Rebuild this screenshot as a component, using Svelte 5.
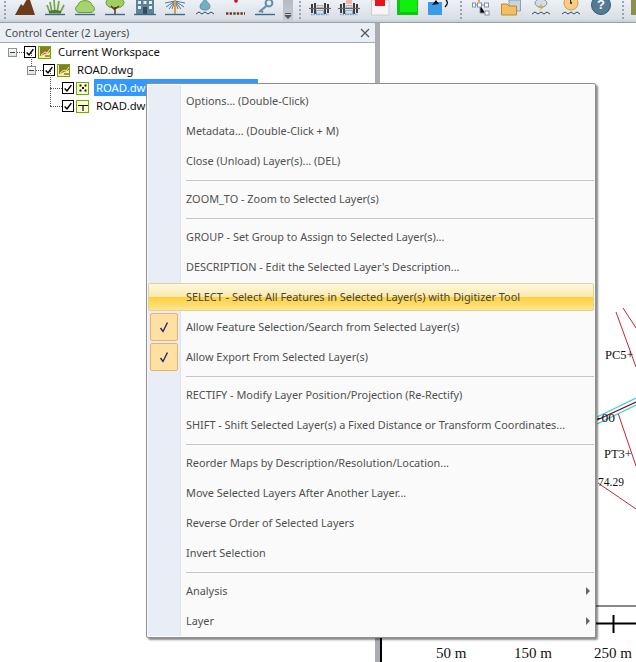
<script lang="ts">
    // Context menu entries: null marks a separator line
    type Entry = { label: string; checked?: boolean; hot?: boolean; sub?: boolean } | null;

    const entries: Entry[] = [
        { label: 'Options... (Double-Click)' },
        { label: 'Metadata... (Double-Click + M)' },
        { label: 'Close (Unload) Layer(s)... (DEL)' },
        null,
        { label: 'ZOOM_TO - Zoom to Selected Layer(s)' },
        null,
        { label: 'GROUP - Set Group to Assign to Selected Layer(s)...' },
        { label: "DESCRIPTION - Edit the Selected Layer's Description..." },
        { label: 'SELECT - Select All Features in Selected Layer(s) with Digitizer Tool', hot: true },
        { label: 'Allow Feature Selection/Search from Selected Layer(s)', checked: true },
        { label: 'Allow Export From Selected Layer(s)', checked: true },
        null,
        { label: 'RECTIFY - Modify Layer Position/Projection (Re-Rectify)' },
        { label: 'SHIFT - Shift Selected Layer(s) a Fixed Distance or Transform Coordinates...' },
        null,
        { label: 'Reorder Maps by Description/Resolution/Location...' },
        { label: 'Move Selected Layers After Another Layer...' },
        { label: 'Reverse Order of Selected Layers' },
        { label: 'Invert Selection' },
        null,
        { label: 'Analysis', sub: true },
        { label: 'Layer', sub: true },
    ];

    const tree = [
        { label: 'Current Workspace', depth: 0, expander: true, glyph: 'work' },
        { label: 'ROAD.dwg', depth: 1, expander: true, glyph: 'work' },
        { label: 'ROAD.dwg', depth: 2, glyph: 'points', selected: true },
        { label: 'ROAD.dwg', depth: 2, glyph: 'lines' },
    ];
</script>

<div class="window">
    <div class="toolbar">
        <span class="grip"></span>
        <div class="group first">
            <svg class="tool" viewBox="0 0 30 22"><path d="M5 15 L11 4 L13 6 L17 -1 L20 0 L25 15Z" fill="#6b3b1c"/></svg>
            <svg class="tool" viewBox="0 0 30 22"><path d="M10 13 L7 5 M12 13 L10 2 M15 13 L14 0 M17 13 L19 1 M20 13 L24 5" stroke="#79a648" stroke-width="1.700" fill="none"/><path d="M9 11 Q15 9 21 11 V13.500 H9Z" fill="#4f7a34"/><path d="M5 14.500H25" stroke="#3e6a8c" stroke-width="1.400"/></svg>
            <svg class="tool" viewBox="0 0 30 22"><path d="M9 12.500 C4 11 5 6 8 5.500 C8 -1 22 -1 22 5.500 C25 6 26 11 21 12.500Z" fill="#a6d36e" stroke="#6d9a3e"/><path d="M5 14.500H25" stroke="#3e6a8c" stroke-width="1.400"/></svg>
            <svg class="tool" viewBox="0 0 30 22"><path d="M6 2 C6 -3 24 -3 24 2 C24 7 19 8 15 8 C11 8 6 7 6 2Z" fill="#9fcf60" stroke="#6d9a3e"/><path d="M15 14 V7 M15 10 L11 6 M15 9 L19 6" stroke="#5a3518" stroke-width="1.500" fill="none"/><path d="M5 14.500H25" stroke="#3e6a8c" stroke-width="1.400"/></svg>
            <svg class="tool" viewBox="0 0 30 22"><path d="M6 0H24V14H6Z" fill="#5f8296"/><path d="M8 1h3v3h-3z M13.500 1h3v3h-3z M19 1h3v3h-3z M8 6h3v3h-3z M19 6h3v3h-3z" fill="#e6eef2"/><path d="M13 7h4v7h-4z" fill="#2f4f63"/><path d="M4 14.500H26" stroke="#3e6a8c" stroke-width="1.400"/></svg>
            <svg class="tool" viewBox="0 0 30 22"><path d="M15 1 L5 3 M15 1 L6 7 M15 1 L9 9 M15 1 L12 9 M15 1 L18 9 M15 1 L21 9 M15 1 L24 7 M15 1 L25 3" stroke="#55788f" stroke-width="1" fill="none"/><path d="M15 1V14" stroke="#e59a45" stroke-width="2"/><path d="M5 14.500H25" stroke="#3e6a8c" stroke-width="1.400"/></svg>
            <svg class="tool" viewBox="0 0 30 22"><path d="M15 -1 C18 3 20 4 20 6.500 C20 9 18 10 15 10 C12 10 10 9 10 6.500 C10 4 12 3 15 -1Z" fill="#6fb0c2" stroke="#3e6a8c" stroke-width=".6"/><path d="M6 14 l3 -2 3 2 3 -2 3 2 3 -2 3 2" stroke="#2f4f63" fill="none"/></svg>
            <svg class="tool" viewBox="0 0 30 22"><circle cx="16" cy="1" r="1.800" fill="#c3122a"/><path d="M6 13.500H25" stroke="#6b3b1c" stroke-width="2.400" stroke-dasharray="2.400 1.200"/></svg>
            <svg class="tool" viewBox="0 0 30 22"><circle cx="19" cy="3" r="3.400" fill="none" stroke="#5f8eaa" stroke-width="2"/><path d="M17 5.500 L9 12 M11 10.500 L13 12.500" stroke="#5f8eaa" stroke-width="2"/><path d="M5 14.500H25" stroke="#3e6a8c" stroke-width="1.400"/></svg>
            <span class="overflow"><svg viewBox="0 0 9 6" width="9" height="6"><path d="M1 0.500H7 M1 2.500H7 L4 5.500Z" stroke="#555" fill="#555" stroke-width="1"/></svg></span>
        </div>
        <div class="group second">
            <span class="grip"></span>
            {#each [0, 1] as i}
                <svg class="bell" viewBox="0 0 22 22">
                    {#if i === 1}<rect x="8" y="0" width="6" height="4" fill="#ecb6a8"/>{/if}
                    <path d="M3 4V13 M19 4V13 M6 3V14 M16 3V14" stroke="#2c2c2c" stroke-width="1.800"/>
                    <path d="M0 8.500H22" stroke="#666" stroke-width="1.200"/>
                    <path d="M8 5.500h6v2h-6z" fill="#e8e4dc" stroke="#8a8378" stroke-width=".5"/>
                    <path d="M2 14.500h18" stroke="#7aa6cc" stroke-width="1.600" stroke-dasharray="1.500 1"/>
                    <path d="M7.500 10.500h7v3.500h-7z" fill="#cfe2f2" stroke="#6a8caa" stroke-width=".6"/>
                </svg>
            {/each}
            <svg class="red" viewBox="0 0 20 22"><path d="M1.500 0H19V15H1.500Z" fill="#f6f6f6" stroke="#ccc"/><path d="M5 0H15V6H5Z" fill="#e8141c"/></svg>
            <svg class="green" viewBox="0 0 21 22"><path d="M0 0H21V15H0Z" fill="#12c412"/><path d="M3 0H20V12H3Z" fill="#0ff00f"/></svg>
            <svg class="blue" viewBox="0 0 22 22"><path d="M0 2H14V15H0Z" fill="#3c9ae8"/><path d="M4 5 L8 0 L11 4Z" fill="#111"/><path d="M18 0 C20 2 20 4 17 7" stroke="#111" stroke-width="1.400" fill="none"/></svg>
            <span class="grip mid"></span>
            <svg class="net" viewBox="0 0 18 22"><path d="M3 5H15 M8 5V13H13" stroke="#7c94a8"/><rect x="0.500" y="3" width="3" height="4" fill="#fff" stroke="#7c94a8"/><rect x="5.500" y="3" width="4" height="4" fill="#fff" stroke="#7c94a8"/><rect x="12.500" y="3" width="4" height="4" fill="#fff" stroke="#7c94a8"/><rect x="13" y="11" width="4" height="4" fill="#fff" stroke="#7c94a8"/><path d="M6 0h2v2h-2z" fill="#e8a33d"/></svg>
            <svg class="folder" viewBox="0 0 20 22"><path d="M8 0H19.500V11H8Z" fill="#c7d3dd" stroke="#8ba0b2"/><path d="M0.500 4H6L8 6H15.500V15H0.500Z" fill="#f2c063" stroke="#c08a2e"/></svg>
            <svg class="bolt" viewBox="0 0 18 22"><ellipse cx="9" cy="3" rx="6" ry="4" fill="#d4dde5" stroke="#7c94a8"/><path d="M10 3 L6 8 H9 L7 11 L12 7 H9Z" fill="#e8a33d"/><path d="M0 14 l3 -2 3 2 3 -2 3 2 3 -2 3 2" stroke="#2f4f63" fill="none"/></svg>
            <svg class="gauge" viewBox="0 0 18 22"><circle cx="9" cy="3" r="7" fill="#f5cd86" stroke="#d39c3f"/><path d="M9 3 L8 -2" stroke="#222"/><circle cx="9" cy="3" r="1" fill="#222"/><path d="M0 14 l3 -2 3 2 3 -2 3 2 3 -2 3 2" stroke="#2f4f63" fill="none"/></svg>
            <span class="help"><span>?</span></span>
            <span class="grip last"></span>
            <svg class="tail" viewBox="0 0 6 22"><path d="M0 0H6V15H0Z" fill="#8f8f4c"/></svg>
        </div>
    </div>

    <div class="main">
        <section class="panel">
            <header class="panel-head">
                <span>Control Center (2 Layers)</span>
                <svg viewBox="0 0 10 10" width="10" height="10"><path d="M1 1L9 9M9 1L1 9" stroke="#555" stroke-width="1.200"/></svg>
            </header>
            <div class="tree">
                {#each tree as node, i}
                    <div class="node" style="padding-left: {8 + node.depth * 19}px">
                        {#if node.depth > 0}
                            <i class="vline" class:long={i === 3} style="left: {node.depth === 1 ? 31 : 50}px"></i>
                        {/if}
                        {#if node.expander}
                            <span class="expander"></span><span class="dots short"></span>
                        {:else}
                            <span class="dots"></span>
                        {/if}
                        <span class="check">
                            <svg viewBox="0 0 12 12" width="10" height="10"><path d="M2 6.500L4.800 9.500L10 2.500" fill="none" stroke="#000" stroke-width="1.800"/></svg>
                        </span>
                        <span class="layer" class:work={node.glyph === 'work'}>
                            {#if node.glyph === 'work'}
                                <svg viewBox="0 0 10 10" width="10" height="10"><path d="M0 0H10V5L0 9Z" fill="#8c7a2a"/><path d="M1 8L5 5L7 6L10 2" fill="none" stroke="#f4ecb0" stroke-width="1"/><path d="M5 9H10" stroke="#b33" stroke-width="1.200"/></svg>
                            {:else if node.glyph === 'points'}
                                <svg viewBox="0 0 10 10" width="10" height="10"><path d="M1.500 1.500h2v2h-2z M6.500 1.500h2v2h-2z M4 4h2v2h-2z M1.500 6.500h2v2h-2z M6.500 6.500h2v2h-2z" fill="#111"/></svg>
                            {:else}
                                <svg viewBox="0 0 10 10" width="10" height="10"><path d="M0 4.500H10 M5 4.500V10" stroke="#111" stroke-width="1.200"/></svg>
                            {/if}
                        </span>
                        <span class="node-label" class:selected={node.selected}>{node.label}</span>
                    </div>
                {/each}
            </div>
        </section>

        <div class="splitter"></div>

        <div class="map">
            <!-- map drawing: coordinates are the content here, origin is the page -->
            <svg viewBox="380 23 256 639" width="256" height="639">
                <g fill="none">
                    <path d="M616 312L636 367M623 308L636 328M618 413L636 466M598 483L636 509" stroke="#c6242c"/>
                    <path d="M597 417L636 398M597 424L636 405" stroke="#35d4dc" stroke-width="1.200"/>
                    <path d="M597 420L636 402" stroke="#7a0f16" stroke-width="1.300"/>
                    <path d="M381 600V662" stroke="#000" stroke-width="2"/>
                    <path d="M596 606H636" stroke="#111"/>
                    <path d="M596 623.500H636" stroke="#000" stroke-width="2"/>
                    <path d="M613.500 615V633" stroke="#000" stroke-width="2"/>
                </g>
                <g class="map-text">
                    <text x="605" y="359">PC5+</text>
                    <text class="big" x="597" y="422">-00</text>
                    <text x="604" y="458">PT3+</text>
                    <text class="small" x="598" y="486">74.29</text>
                </g>
                <g class="scale-text">
                    <text x="436" y="658">50 m</text>
                    <text x="514" y="658">150 m</text>
                    <text x="594" y="658">250 m</text>
                </g>
            </svg>
        </div>
    </div>

    <div class="menu">
        <div class="gutter"></div>
        {#each entries as entry}
            {#if entry === null}
                <div class="sep"></div>
            {:else}
                <div class="item" class:hot={entry.hot}>
                    <span class="mark">
                        {#if entry.checked}
                            <span class="tick">
                                <svg viewBox="0 0 10 12" width="10" height="12"><path d="M1.500 7L4 10.500L8.500 1.500" fill="none" stroke="#1c2a6b" stroke-width="1.400"/></svg>
                            </span>
                        {/if}
                    </span>
                    <span class="text">{entry.label}</span>
                    {#if entry.sub}<span class="arrow"></span>{/if}
                </div>
            {/if}
        {/each}
    </div>
</div>

<style>
    :global(body) {
        margin: 0;
    }

    .window {
        position: relative;
        width: 636px;
        height: 662px;
        overflow: hidden;
        display: flex;
        flex-direction: column;
        background: #fff;
        font-family: "Noto Sans", "Liberation Sans", sans-serif;
    }

    /* toolbar */
    .toolbar {
        flex: none;
        height: 22px;
        display: flex;
        background: linear-gradient(#edf1f6, #d9dfe6 85%, #c6cdd5);
        border-bottom: 1px solid #9aa0a6;
        overflow: hidden;
    }

    .group {
        display: flex;
        align-items: flex-start;
        height: 22px;
    }

    .grip {
        flex: none;
        width: 2px;
        height: 20px;
        margin: 1px 4px 0 4px;
        background: repeating-linear-gradient(#9aa4ae 0 2px, transparent 2px 4px);
    }

    .tool {
        flex: none;
        width: 30px;
        height: 22px;
    }

    /* fixed slots so each icon lands where the bar has it */
    .second svg {
        flex: none;
        height: 22px;
    }

    .second .grip:first-child {
        margin: 1px 8px 0 6px;
    }

    .bell {
        width: 22px;
        margin-right: 7px;
    }

    .red {
        width: 20px;
        margin-left: 3px;
    }

    .green {
        width: 21px;
        margin-left: 7px;
    }

    .blue {
        width: 22px;
        margin-left: 10px;
    }

    .grip.mid {
        margin: 1px 10px 0 10px;
    }

    .net {
        width: 18px;
    }

    .folder {
        width: 20px;
        margin-left: 11px;
    }

    .bolt {
        width: 18px;
        margin-left: 11px;
    }

    .gauge {
        width: 18px;
        margin-left: 12px;
    }

    /* the bar crops the top of the disc, the mark itself stays inside */
    .help {
        flex: none;
        width: 20px;
        height: 20px;
        margin: -5px 0 0 11px;
        display: flex;
        align-items: flex-end;
        justify-content: center;
        border-radius: 50%;
        background: #557a96;
        border: 1px solid #3c5a72;
        box-sizing: border-box;
        color: #fff;
        font: bold 13px/15px "Liberation Sans", sans-serif;
        padding-bottom: 2px;
    }

    .grip.last {
        margin: 1px 7px 0 11px;
    }

    .tail {
        width: 6px;
    }

    .overflow {
        flex: none;
        width: 10px;
        height: 22px;
        margin-left: 3px;
        background: linear-gradient(#b4bbc4, #c9cfd6);
        display: flex;
        align-items: flex-end;
        justify-content: center;
        padding-bottom: 3px;
        box-sizing: border-box;
    }

    /* main area */
    .main {
        flex: 1;
        display: flex;
        min-height: 0;
    }

    .panel {
        width: 375px;
        flex: none;
        display: flex;
        flex-direction: column;
    }

    .panel-head {
        height: 19px;
        flex: none;
        display: flex;
        align-items: center;
        justify-content: space-between;
        padding: 0 5px;
        background: #eaeff6;
        border-bottom: 1px solid #a6abb2;
        font-size: 10.700px;
        color: #4a4a4a;
    }

    .tree {
        flex: 1;
        font-size: 11.300px;
        color: #111;
    }

    .node {
        position: relative;
        height: 18px;
        display: flex;
        align-items: center;
    }

    .vline {
        position: absolute;
        top: -9px;
        height: 14px;
        border-left: 1px dotted #555;
    }

    .vline.long {
        top: -27px;
        height: 36px;
    }

    .expander {
        flex: none;
        width: 9px;
        height: 9px;
        box-sizing: border-box;
        border: 1px solid #8a9199;
        background: linear-gradient(#fff, #dde1e6);
        position: relative;
    }

    .expander::after {
        content: '';
        position: absolute;
        left: 1px;
        right: 1px;
        top: 3px;
        height: 1px;
        background: #444;
    }

    .dots {
        flex: none;
        width: 12px;
        margin-left: 4px;
        border-top: 1px dotted #555;
    }

    .dots.short {
        width: 7px;
        margin-left: 0;
    }

    .check {
        flex: none;
        width: 12px;
        height: 12px;
        box-sizing: border-box;
        border: 1px solid #000;
        background: #fff;
        display: flex;
        align-items: center;
        justify-content: center;
    }

    .layer {
        flex: none;
        width: 13px;
        height: 13px;
        margin-left: 2px;
        box-sizing: border-box;
        border: 1.500px solid #62b000;
        background: #fdfbd0;
        display: flex;
        align-items: center;
        justify-content: center;
    }

    .layer svg {
        display: block;
        flex: none;
    }

    .layer.work {
        background: #f6ec9a;
    }

    .node-label {
        margin-left: 5px;
        padding: 0 2px;
        line-height: 17px;
        margin-top: -1px;
    }

    .node-label.selected {
        width: 160px;
        background: #3399ff;
        color: #fff;
    }

    /* right side */
    .splitter {
        width: 5px;
        flex: none;
        background: #a9adb2;
    }

    .map {
        flex: 1;
        min-width: 0;
    }

    .map svg {
        display: block;
    }

    .map-text text {
        font: 12.500px "Liberation Serif", serif;
        fill: #111;
    }

    .map-text .big {
        font-size: 13.500px;
    }

    .map-text .small {
        font-size: 11.500px;
    }

    .scale-text text {
        font: 15px "Liberation Serif", serif;
        fill: #111;
    }

    /* context menu */
    .menu {
        position: absolute;
        left: 146px;
        top: 83px;
        width: 450px;
        height: 555px;
        box-sizing: border-box;
        padding: 2px 1px 1px;
        background: #fafafa;
        border: 1px solid #8f8f8f;
        border-radius: 2px;
        box-shadow: 2px 2px 2px rgba(0, 0, 0, 0.45);
        font-size: 10.900px;
        color: #505050;
    }

    .gutter {
        position: absolute;
        left: 1px;
        top: 1px;
        bottom: 1px;
        width: 32px;
        background: #e9eef6;
        border-right: 1px solid #dfe3ea;
    }

    .item {
        position: relative;
        height: 30px;
        display: flex;
        align-items: center;
        box-sizing: border-box;
    }

    .item.hot {
        height: 28px;
        margin: 1px 0;
        color: #444;
        border: 1px solid #dcd29e;
        border-radius: 2px;
        background: linear-gradient(#fdf8e0, #fbe9a9 50%, #fdd03a 50%, #fee68f);
    }

    .mark {
        flex: none;
        width: 38px;
        display: flex;
        justify-content: center;
        padding-right: 6px;
        box-sizing: border-box;
    }

    .item.hot .mark {
        width: 37px;
    }

    .tick {
        width: 28px;
        height: 28px;
        box-sizing: border-box;
        border: 1px solid #f0ae6c;
        border-radius: 2px;
        background: #fde0a2;
        display: flex;
        align-items: center;
        justify-content: center;
    }

    .text {
        white-space: nowrap;
        margin-top: -2px;
    }

    .arrow {
        position: absolute;
        right: 4px;
        top: 11px;
        border-left: 4px solid #666;
        border-top: 4px solid transparent;
        border-bottom: 4px solid transparent;
    }

    .sep {
        position: relative;
        height: 1px;
        margin: 4px 0 3px 38px;
        background: #c6c6c6;
    }
</style>
